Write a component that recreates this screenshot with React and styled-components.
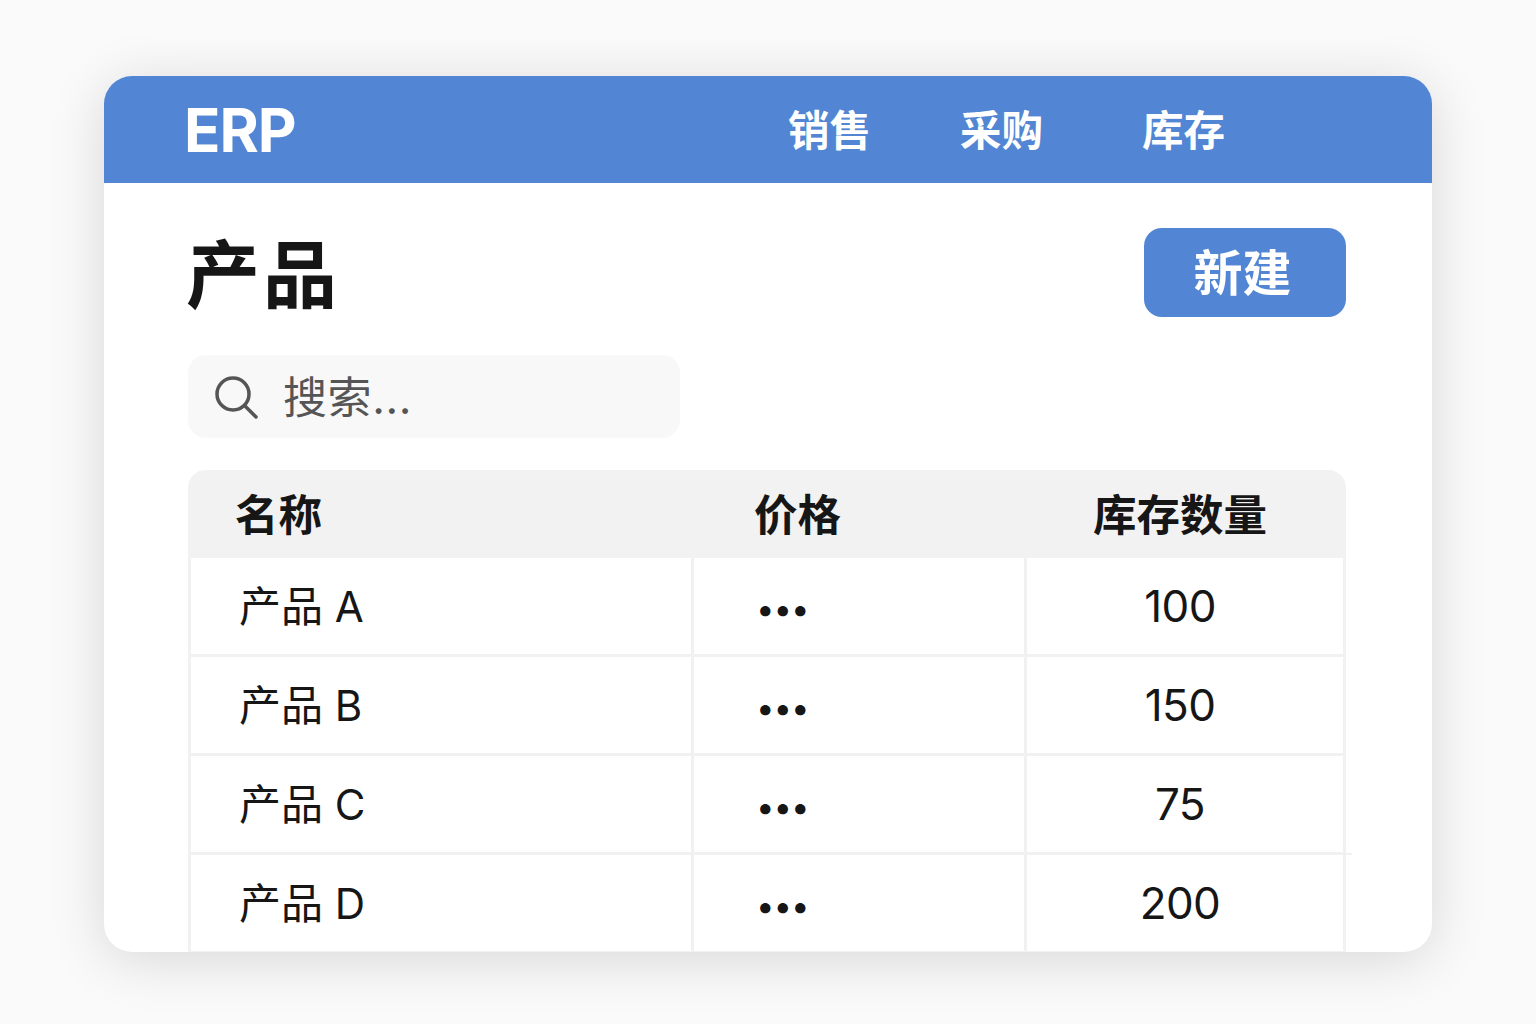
import React from 'react';
import styled, { createGlobalStyle } from 'styled-components';

const GlobalStyle = createGlobalStyle`
  html, body {
    margin: 0;
    background: #fafafa;
    font-family: Inter, "Noto Sans CJK SC", sans-serif;
    color: #161616;
  }
`;

const Page = styled.div`
  width: 1536px;
  height: 1024px;
  padding: 76px 104px 0;
  box-sizing: border-box;
  overflow: hidden;
`;

const Card = styled.div`
  height: 876px;
  background: #fff;
  border-radius: 28px;
  overflow: hidden;
  box-shadow: 0 8px 56px rgba(0, 0, 0, 0.14);
`;

const Header = styled.header`
  height: 107px;
  background: #5285d3;
  display: flex;
  align-items: center;
  padding-left: 80px;
  color: #fff;
`;

const Logo = styled.div`
  width: 604px;
  font-size: 60px;
  font-weight: 700;
  letter-spacing: -1px;
`;

const Nav = styled.nav`
  display: flex;
  padding-bottom: 4px;
  font-size: 41.5px;
  font-weight: 700;
`;

const NavItem = styled.span`
  margin-right: ${props => props.$gap || 0}px;
`;

const Content = styled.main`
  padding: 45px 86px 0 84px;
`;

const TitleRow = styled.div`
  display: flex;
  justify-content: space-between;
  align-items: center;
  height: 89px;
`;

const Title = styled.h1`
  margin: 0 0 6px -2px;
  font-size: 74px;
  font-weight: 700;
  letter-spacing: 3px;
`;

const NewButton = styled.button`
  width: 202px;
  height: 89px;
  padding: 0 5px 7px 0;
  border: 0;
  border-radius: 18px;
  background: #5285d3;
  color: #fff;
  font: 700 49px Inter, "Noto Sans CJK SC", sans-serif;
`;

const Search = styled.div`
  width: 492px;
  height: 83px;
  margin-top: 38px;
  padding-left: 26px;
  box-sizing: border-box;
  display: flex;
  align-items: center;
  gap: 25px;
  background: #f8f8f8;
  border-radius: 18px;
  color: #555;
  font-size: 44px;
`;

const SearchText = styled.span`
  padding-bottom: 4px;
  letter-spacing: 0.6px;
`;

const Table = styled.div`
  margin-top: 32px;
`;

const HeadRow = styled.div`
  display: grid;
  grid-template-columns: 503px 333px 322px;
  height: 88px;
  background: #f2f2f2;
  border-radius: 18px 18px 0 0;
  font-size: 43.5px;
  font-weight: 700;
`;

const HeadCell = styled.div`
  display: flex;
  align-items: center;
  justify-content: ${props => (props.$center ? 'center' : 'flex-start')};
  padding: 0 ${props => (props.$center ? 10 : 0)}px 4px ${props => props.$inset || 0}px;
`;

const Row = styled.div`
  position: relative;
  display: grid;
  grid-template-columns: 503px 333px 322px;
  height: 99px;
  box-sizing: border-box;
  border-bottom: 3px solid #f1f1f1;
  font-size: 42px;

  /* the one divider that runs past the table's right edge */
  &::after {
    content: '';
    display: ${props => (props.$overhang ? 'block' : 'none')};
    position: absolute;
    right: -6px;
    bottom: -3px;
    width: 6px;
    height: 2px;
    background: #f1f1f1;
  }
`;

const Cell = styled.div`
  display: flex;
  align-items: center;
  justify-content: ${props => (props.$center ? 'center' : 'flex-start')};
  padding-left: ${props => props.$inset || 0}px;
  padding-right: ${props => (props.$center ? 10 : 0)}px;
  border-left: 3px solid #f1f1f1;
  border-right: ${props => (props.$last ? '3px solid #f1f1f1' : '0')};
`;

const Name = styled.span`
  padding-bottom: 6px;
`;

const Dots = styled.span`
  padding-top: 6px;
  font-size: 33px;
  letter-spacing: -1.1px;
`;

const Amount = styled.span`
  font-size: 44px;
  letter-spacing: -0.6px;
`;

const rows = [
  ['A', '100'],
  ['B', '150'],
  ['C', '75', true],
  ['D', '200'],
];

const SearchIcon = () => (
  <svg width="44" height="44" viewBox="0 0 44 44" fill="none" stroke="#555" strokeWidth="3.5" strokeLinecap="round">
    <circle cx="19" cy="19" r="16" />
    <path d="M31 31 L42 42" />
  </svg>
);

export default function App() {
  return (
    <Page>
      <GlobalStyle />
      <Card>
        <Header>
          <Logo>ERP</Logo>
          <Nav>
            <NavItem $gap={89}>销售</NavItem>
            <NavItem $gap={99}>采购</NavItem>
            <NavItem>库存</NavItem>
          </Nav>
        </Header>
        <Content>
          <TitleRow>
            <Title>产品</Title>
            <NewButton>新建</NewButton>
          </TitleRow>
          <Search>
            <SearchIcon />
            <SearchText>搜索...</SearchText>
          </Search>
          <Table>
            <HeadRow>
              <HeadCell $inset={47}>名称</HeadCell>
              <HeadCell $inset={63}>价格</HeadCell>
              <HeadCell $center>库存数量</HeadCell>
            </HeadRow>
            {rows.map(([name, stock, overhang]) => (
              <Row key={name} $overhang={overhang}>
                <Cell $inset={48}><Name>产品 {name}</Name></Cell>
                <Cell $inset={62}><Dots>•••</Dots></Cell>
                <Cell $center $last><Amount>{stock}</Amount></Cell>
              </Row>
            ))}
          </Table>
        </Content>
      </Card>
    </Page>
  );
}
